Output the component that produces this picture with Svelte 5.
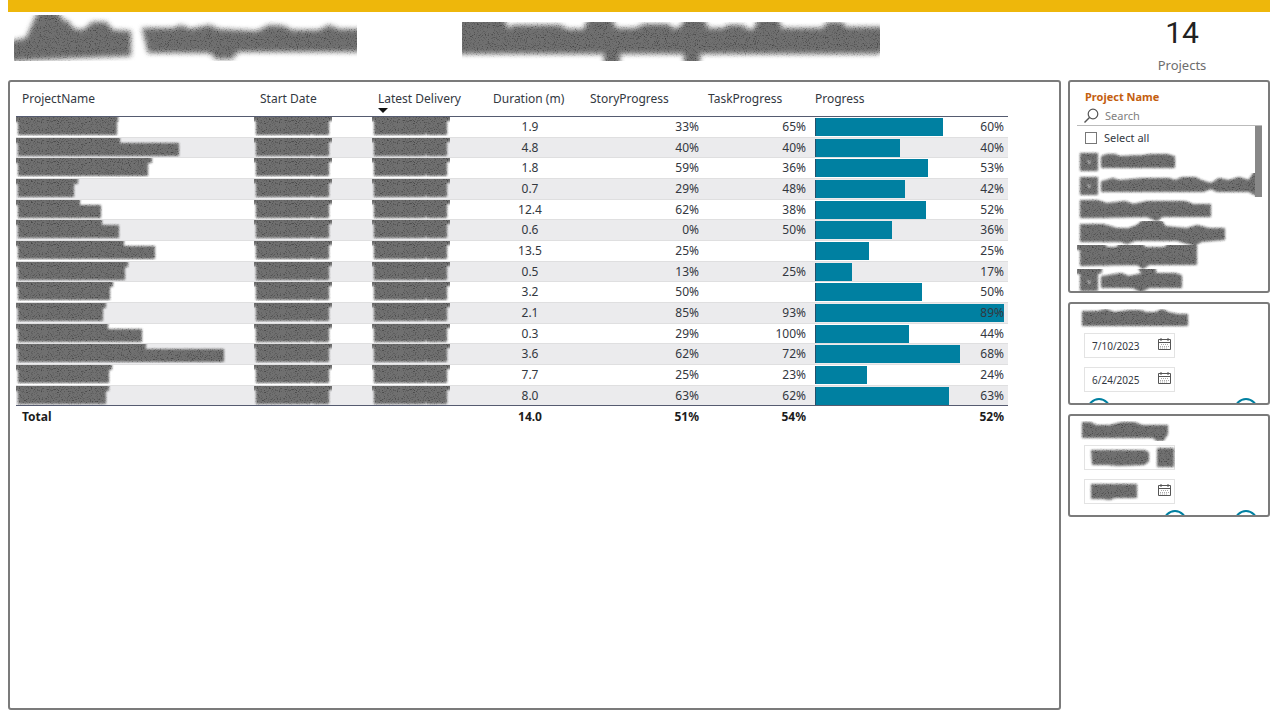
<script lang="ts">
  // Table rows; the redacted name is described by its top and full width
  const rows = [
    { top: 101, name: 100, duration: '1.9', story: 33, task: 65, progress: 60 },
    { top: 103, name: 162, duration: '4.8', story: 40, task: 40, progress: 40 },
    { top: 135, name: 131, duration: '1.8', story: 59, task: 36, progress: 53 },
    { top: 61, name: 57, duration: '0.7', story: 29, task: 48, progress: 42 },
    { top: 63, name: 84, duration: '12.4', story: 62, task: 38, progress: 52 },
    { top: 85, name: 102, duration: '0.6', story: 0, task: 50, progress: 36 },
    { top: 107, name: 138, duration: '13.5', story: 25, task: null, progress: 25 },
    { top: 111, name: 108, duration: '0.5', story: 13, task: 25, progress: 17 },
    { top: 96, name: 93, duration: '3.2', story: 50, task: null, progress: 50 },
    { top: 89, name: 86, duration: '2.1', story: 85, task: 93, progress: 89 },
    { top: 91, name: 125, duration: '0.3', story: 29, task: 100, progress: 44 },
    { top: 129, name: 207, duration: '3.6', story: 62, task: 72, progress: 68 },
    { top: 95, name: 92, duration: '7.7', story: 25, task: 23, progress: 24 },
    { top: 92, name: 89, duration: '8.0', story: 63, task: 62, progress: 63 }
  ];

  const maxProgress = Math.max(...rows.map((row) => row.progress));

  // Redacted slicer entries
  const checkBlock = 'M4 5H20V21H4ZM10 11V15H14V11Z';
  const projects = [
    checkBlock + 'M25 8L30 6H38L42 8L66 7L74 6L90 6L97 8V18H25Z',
    checkBlock + 'M25 9L36 6L42 8L66 6H92L98 8L106 5H118L124 8L134 11L142 6L152 8L162 5L172 8L180 -4V22L172 18H140L134 15L126 18H25Z',
    'M4 4H20L30 7L48 5L56 8L70 5H108L116 8H133V19H85L80 23L70 19L20 20H4Z',
    'M4 4H26L40 8L52 8L60 5L66 0H84L88 6L110 8L120 5L132 8H147V18L124 20L118 24L100 19H58L50 22L44 20H4Z',
    'M0 -4H24L30 3H40L44 -4H62L68 3H88L94 -4H119V19H72L66 23L60 19L4 20V4H0Z',
    'M0 -4H24V3L20 4V21H4V4H0ZM10 11V15H14V11ZM60 -4H78V5L98 5L104 7V18H72L64 22L56 18H25V8L44 5L52 8L66 5Z'
  ];

  const dateSlicers = [
    {
      title: 'M3 3H18L26 1L34 4L50 2H60L66 4H76L82 1L88 4L98 6H107V16H3Z',
      from: '7/10/2023',
      to: '6/24/2025',
      start: 0
    },
    {
      title: 'M3 2H10L16 5H30L42 2L54 2L62 5H87V13L83 19H77L73 16H3Z',
      from: '',
      to: '',
      start: 52
    }
  ];

  let selectAll = $state(false);

  function percent(value: number | null) {
    return value === null ? '' : `${value}%`;
  }

  function namePath(top: number, full: number) {
    const shoulder = full > top ? 6 : 4;
    return `M-4 -4H${top}V${shoulder}H${full}V17H3V4H-4Z`;
  }
</script>

{#snippet smudge(width: number, height: number, path: string, filter = 'smudge')}
  <svg class={filter} {width} {height} viewBox="0 0 {width} {height}" aria-hidden="true">
    <path d={path} fill-rule="evenodd" filter="url(#{filter})" />
  </svg>
{/snippet}

{#snippet calendar()}
  <svg width="13" height="13" viewBox="0 0 13 13" aria-hidden="true">
    <path d="M.5 1.500H12.500V11.500H.5ZM.5 4.500H12.500M3 0V3M10 0V3" fill="none" stroke="#555" />
    <path d="M3 6.500H11M2 8.500H11M2 10H9" fill="none" stroke="#aaa" stroke-dasharray="1 1" />
  </svg>
{/snippet}

<!-- Shared grain and blur for the redacted areas -->
<svg class="defs" width="0" height="0" aria-hidden="true">
  <defs>
    {#each [{ id: 'smudge', blur: 1.3 }, { id: 'smudge-large', blur: 2.6 }] as f}
      <filter id={f.id} filterUnits="userSpaceOnUse" x="-10" y="-10" width="450" height="80" color-interpolation-filters="sRGB">
        <feGaussianBlur stdDeviation={f.blur} result="shape" />
        <feTurbulence type="fractalNoise" baseFrequency="0.9" numOctaves="2" />
        <feColorMatrix values="0 0 0 0 0.2  0 0 0 0 0.2  0 0 0 0 0.2  2.4 0 0 0 -1.25" />
        <feComposite in2="shape" operator="in" result="grain" />
        <feMerge>
          <feMergeNode in="shape" />
          <feMergeNode in="grain" />
        </feMerge>
      </filter>
    {/each}
  </defs>
</svg>

<div class="report">
  <header>
    <div class="titles">
      {@render smudge(343, 46, 'M-8 27L12 23L20 5L26 -6H42L48 4L55 7L59 13L66 15L72 13L78 7H92L99 15L117 16V41L60 43L0 46H-8ZM128 13L160 13L167 10L176 14L186 12L196 10L204 14L243 16L255 10L270 11L278 15H305L315 10L325 14H354V37H224L218 44H202L196 38H134Z', 'smudge-large')}
      {@render smudge(418, 39, 'M-8 -8H42L45 6L52 3H98L105 7H122L128 -8H148L154 6H174L182 2H206L213 7L220 3L225 -8H240L246 6H262L266 3H280L286 7H292L298 -8H314L320 6H360L366 0H380L384 5H428V24L416 32H238V48H222V32H158V48H142V32H-8Z', 'smudge-large')}
    </div>
    <div class="card">
      <strong>14</strong>
      <span>Projects</span>
    </div>
  </header>

  <main>
    <section class="panel table-panel">
      <table>
        <colgroup>
          <col />
          <col class="start" />
          <col class="delivery" />
          <col class="duration" />
          <col class="story" />
          <col class="task" />
          <col class="progress" />
        </colgroup>
        <thead>
          <tr>
            <th>ProjectName</th>
            <th>Start Date</th>
            <th class="sorted" aria-sort="descending">Latest Delivery</th>
            <th>Duration (m)</th>
            <th>StoryProgress</th>
            <th>TaskProgress</th>
            <th class="flush">Progress</th>
          </tr>
        </thead>
        <tbody>
          {#each rows as row}
            <tr>
              <td class="hidden-value">{@render smudge(216, 19, namePath(row.top, row.name))}</td>
              <td class="hidden-value">{@render smudge(78, 19, 'M-4 -4H82V3H74V17H60L58 15L56 17H3V3H-4Z')}</td>
              <td class="hidden-value">{@render smudge(78, 19, 'M-4 -4H82V3H74V17H56L54 15L52 17H3V3H-4Z')}</td>
              <td class="duration">{row.duration}</td>
              <td class="number story">{percent(row.story)}</td>
              <td class="number">{percent(row.task)}</td>
              <td class="bar-cell">
                <div class="track">
                  <div class="bar" style="width: {(row.progress / maxProgress) * 100}%"></div>
                  <span>{percent(row.progress)}</span>
                </div>
              </td>
            </tr>
          {/each}
        </tbody>
        <tfoot>
          <tr>
            <td>Total</td>
            <td></td>
            <td></td>
            <td class="duration">14.0</td>
            <td class="number story">51%</td>
            <td class="number">54%</td>
            <td class="number total-progress">52%</td>
          </tr>
        </tfoot>
      </table>
    </section>

    <aside>
      <section class="panel slicer">
        <h2>Project Name</h2>
        <div class="search">
          <svg width="15" height="15" viewBox="0 0 15 15" aria-hidden="true">
            <circle cx="9" cy="6" r="4.800" fill="none" stroke="#555" stroke-width="1.200" />
            <path d="M5.500 9.500L.5 14.500" stroke="#555" stroke-width="1.400" />
          </svg>
          <input type="text" placeholder="Search" aria-label="Search" />
        </div>
        <div class="options">
          <ul>
            <li>
              <label><input type="checkbox" bind:checked={selectAll} />Select all</label>
            </li>
            {#each projects as path}
              <li>{@render smudge(179, 24, path)}</li>
            {/each}
          </ul>
          <div class="scrollbar"></div>
        </div>
      </section>

      {#each dateSlicers as slicer}
        <section class="panel date-slicer">
          {@render smudge(120, 20, slicer.title)}
          <div class="date-box">
            {#if slicer.from}
              <input type="text" value={slicer.from} aria-label="Start date" />
              <button aria-label="Pick start date">{@render calendar()}</button>
            {:else}
              {@render smudge(90, 23, 'M7 5H59L63 7V15L59 18L34 19L22 18H8ZM73 3H88V20H73Z')}
            {/if}
          </div>
          <div class="date-box">
            {#if slicer.to}
              <input type="text" value={slicer.to} aria-label="End date" />
            {:else}
              <div class="covered">{@render smudge(60, 23, 'M7 5H51V17H30L24 19L18 18H7Z')}</div>
            {/if}
            <button aria-label="Pick end date">{@render calendar()}</button>
          </div>
          <div class="range">
            <input type="range" value={slicer.start} aria-label="Range start" />
            <input type="range" value="100" aria-label="Range end" />
          </div>
        </section>
      {/each}
    </aside>
  </main>
</div>

<style>
  :global(body) {
    margin: 0;
    background: #fff;
  }

  .report {
    display: flex;
    flex-direction: column;
    box-sizing: border-box;
    min-height: 100vh;
    padding: 0 10px 10px 8px;
    font-family: 'Noto Sans', 'Open Sans', sans-serif;
    font-size: 12px;
    color: #33383f;
  }

  .defs {
    position: absolute;
  }

  .smudge,
  .smudge-large {
    display: block;
    flex: none;
    overflow: hidden;
    fill: #707070;
  }

  .smudge {
    stroke: #707070;
    stroke-width: 2px;
    stroke-linejoin: round;
  }

  header {
    display: flex;
    justify-content: space-between;
    box-sizing: border-box;
    height: 80px;
    border-top: 12px solid #eeb70b;
  }

  .titles {
    display: flex;
    align-items: flex-end;
    gap: 105px;
    height: 49px;
    padding-left: 6px;
  }

  .card {
    display: flex;
    flex-direction: column;
    align-items: center;
    width: 176px;
    padding-top: 5px;
    color: #6e6e6e;
    font-size: 13px;
    line-height: 20px;
  }

  .card strong {
    margin-bottom: 6px;
    font-family: Roboto, sans-serif;
    font-size: 30px;
    font-weight: 400;
    line-height: 32px;
    color: #222;
  }

  main {
    display: grid;
    flex: 1;
    grid-template-columns: minmax(0, 1fr) 202px;
    gap: 7px;
  }

  .panel {
    box-sizing: border-box;
    border: 2px solid #7b7b7b;
    border-radius: 3px;
    overflow: hidden;
  }

  .table-panel {
    padding: 0 51px 0 6px;
  }

  table {
    width: 100%;
    table-layout: fixed;
    border-spacing: 0;
    line-height: 16px;
  }

  col.start {
    width: 118px;
  }

  col.delivery {
    width: 115px;
  }

  col.duration {
    width: 97px;
  }

  col.story {
    width: 118px;
  }

  col.task {
    width: 110px;
  }

  col.progress {
    width: 196px;
  }

  th,
  td {
    box-sizing: border-box;
    height: 21px;
    padding: 0 6px;
    text-align: left;
    white-space: nowrap;
  }

  th {
    height: 35px;
    border-bottom: 1px solid #555b70;
    font-weight: 400;
  }

  th.flush {
    padding-left: 3px;
  }

  .sorted {
    position: relative;
  }

  .sorted::after {
    content: '';
    position: absolute;
    left: 6px;
    bottom: 3px;
    border: 5px solid transparent;
    border-top-color: #111;
    border-bottom: 0;
  }

  tbody td {
    border-bottom: 1px solid #dfdfe0;
  }

  tbody tr:nth-child(even) {
    background: #ebebed;
  }

  /* Every third row is a pixel shorter */
  tbody tr:nth-child(3n + 2) td {
    height: 20px;
  }

  tbody tr:last-child td {
    border-bottom-color: #555b70;
  }

  td.hidden-value {
    padding: 0;
    vertical-align: top;
  }

  td.duration {
    padding-right: 17px;
    text-align: center;
  }

  td.number {
    text-align: right;
  }

  td.story {
    padding-right: 3px;
  }

  td.bar-cell {
    padding: 0 4px 0 3px;
  }

  .track {
    display: grid;
    align-items: center;
    border-left: 1px solid #24506a;
  }

  .bar,
  .track span {
    grid-area: 1 / 1;
  }

  .bar {
    height: 18px;
    background: #0080a1;
  }

  .track span {
    justify-self: end;
  }

  tfoot td {
    font-weight: 700;
    color: #1c1c1c;
  }

  td.total-progress {
    padding-right: 4px;
  }

  aside {
    display: flex;
    flex-direction: column;
    gap: 9px;
  }

  .slicer {
    display: flex;
    flex-direction: column;
    height: 213px;
    padding: 6px 6px 0 7px;
  }

  h2 {
    margin: 0;
    padding-left: 8px;
    font-size: 11px;
    line-height: 18px;
    color: #c4600f;
  }

  .search {
    display: flex;
    align-items: center;
    gap: 6px;
    height: 19px;
    padding-left: 7px;
    border-bottom: 1px solid #bbb;
  }

  input {
    min-width: 0;
    margin: 0;
    padding: 0;
    border: 0;
    background: none;
    font: inherit;
    color: inherit;
  }

  .search input {
    flex: 1;
    font-size: 11px;
  }

  .search input::placeholder {
    color: #808080;
  }

  .options {
    display: flex;
    min-height: 0;
  }

  ul {
    flex: 1;
    min-width: 0;
    margin: 0;
    padding: 0;
    overflow: hidden;
    list-style: none;
  }

  li {
    height: 24px;
  }

  li:first-child {
    height: 23px;
  }

  label {
    display: flex;
    align-items: center;
    gap: 7px;
    height: 24px;
    padding-left: 8px;
    font-size: 11px;
  }

  input[type='checkbox'] {
    width: 12px;
    height: 12px;
    appearance: none;
    border: 1px solid #777;
  }

  input[type='checkbox']:checked {
    background: #555;
  }

  .scrollbar {
    width: 7px;
    height: 71px;
    background: #888;
  }

  .date-slicer {
    display: flex;
    flex-direction: column;
    height: 103px;
    padding: 5px 10px 0;
  }

  .date-box {
    display: flex;
    flex: none;
    align-items: center;
    box-sizing: border-box;
    width: 91px;
    height: 25px;
    margin: 4px 0 5px 4px;
    border: 1px solid #e3e3e3;
  }

  .date-box input {
    flex: 1;
    padding-left: 7px;
    font-size: 10px;
  }

  .covered {
    flex: 1;
    min-width: 0;
  }

  button {
    display: flex;
    margin: 0 3px 2px 0;
    padding: 0;
    border: 0;
    background: none;
  }

  .range {
    display: grid;
    flex: none;
    margin: 1px 0 0 7px;
  }

  .range input {
    grid-area: 1 / 1;
    width: 100%;
    height: 24px;
    appearance: none;
    pointer-events: none;
  }

  .range input::-webkit-slider-thumb {
    box-sizing: border-box;
    width: 24px;
    height: 24px;
    appearance: none;
    border: 2px solid #0080a1;
    border-radius: 50%;
    background: #fff;
    pointer-events: auto;
  }
</style>
